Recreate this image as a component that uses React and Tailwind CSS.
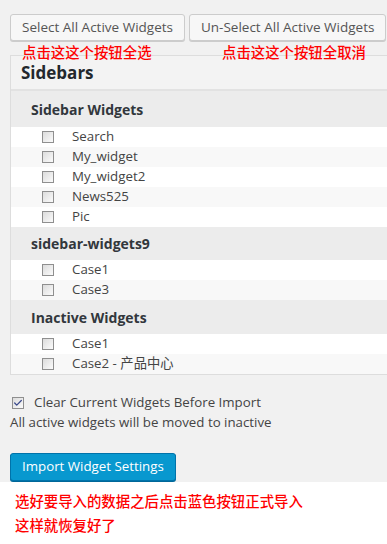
import { Check } from 'lucide-react';

const SECTIONS = [
  { title: 'Sidebar Widgets', height: 'h-9', items: ['Search', 'My_widget', 'My_widget2', 'News525', 'Pic'] },
  { title: 'sidebar-widgets9', height: 'h-[33px]', items: ['Case1', 'Case3'] },
  { title: 'Inactive Widgets', height: 'h-[34px]', items: ['Case1', 'Case2 - 产品中心'] },
];

const SANS = 'font-["Open_Sans","Noto_Sans_CJK_SC",sans-serif]';
const CJK = 'font-["Noto_Sans_CJK_SC",sans-serif]';

function Box({ checked }) {
  return (
    <span className="flex h-3 w-3 shrink-0 items-center justify-center border border-[#8f8f8f] bg-gradient-to-br from-[#dcdcdc] to-[#fbfbfb]">
      {checked && <Check size={10} strokeWidth={3} className="text-[#3b4a8c]" />}
    </span>
  );
}

function Button({ children }) {
  return (
    <button className="h-[27px] shrink-0 whitespace-nowrap rounded-[3px] border border-[#cccccc] bg-[#f7f7f7] px-[11px] text-[13.5px] text-[#555] shadow-[0_1px_0_#cccccc]">
      {children}
    </button>
  );
}

export default function App() {
  return (
    <div className={`relative h-[544px] w-[387px] overflow-hidden bg-white text-[#444] ${SANS}`}>
      <div className="bg-[#f1f1f1] pb-px pl-2.5 pt-3.5">
        <div className="flex gap-[4px]">
          <Button>Select All Active Widgets</Button>
          <Button>Un-Select All Active Widgets</Button>
        </div>

        <div className="mt-3.5 w-[400px] border-b border-l border-t border-[#dddddd] bg-[#f3f3f3]">
          <div className="flex h-[35px] items-center border-b-2 border-[#e2e2e2] pl-2.5 text-[17px] font-bold text-[#23282d]">
            Sidebars
          </div>
          {SECTIONS.map((s) => (
            <div key={s.title}>
              <div className={`flex ${s.height} items-center bg-[#ececec] pl-5 text-[14px] font-bold text-[#32373c]`}>
                {s.title}
              </div>
              {s.items.map((item, i) => (
                <div
                  key={item}
                  className={`flex h-5 items-center pl-[31px] text-[13.3px] ${i % 2 ? 'bg-[#f8f8f8]' : 'bg-white'}`}
                >
                  <Box />
                  <span className="ml-[18px]">{item}</span>
                </div>
              ))}
            </div>
          ))}
        </div>

        <div className="mt-[18px] flex h-5 items-center pl-0.5 text-[13.3px]">
          <Box checked />
          <span className="ml-2.5">Clear Current Widgets Before Import</span>
        </div>
        <div className="flex h-5 items-center text-[13.3px]">All active widgets will be moved to inactive</div>

        <button className="mt-[20px] h-[28px] whitespace-nowrap rounded-[3px] border border-[#0073aa] bg-[#0898cf] px-[11px] text-[13.3px] text-white shadow-[0_1px_0_#006799]">
          Import Widget Settings
        </button>
      </div>

      <div className={`px-[15px] pt-[7px] text-[14.4px] font-medium leading-6 text-[#ff0000] ${CJK}`}>
        <p>选好要导入的数据之后点击蓝色按钮正式导入</p>
        <p>这样就恢复好了</p>
      </div>

      <span className={`absolute left-[22px] top-[41px] text-[14.4px] font-medium text-[#ff0000] ${CJK}`}>点击这这个按钮全选</span>
      <span className={`absolute left-[222px] top-[41px] text-[14.4px] font-medium text-[#ff0000] ${CJK}`}>点击这这个按钮全取消</span>
    </div>
  );
}
